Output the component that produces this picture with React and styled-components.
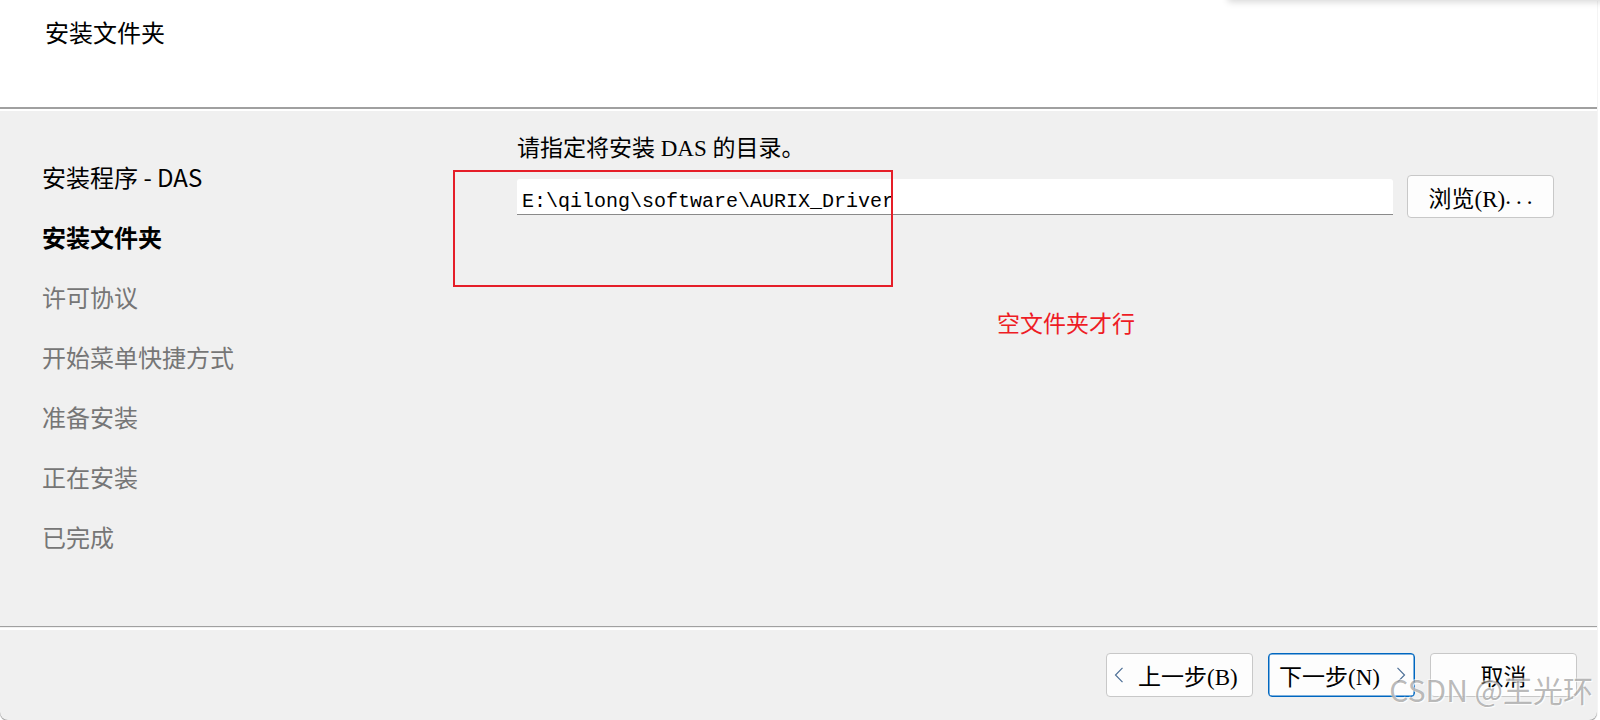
import React from "react";
import styled, { createGlobalStyle } from "styled-components";

const Global = createGlobalStyle`
  html, body { margin: 0; padding: 0; background: #ffffff; }
  body { width: 1600px; height: 720px; overflow: hidden; }
  #root { width: 1600px; height: 720px; }
`;

const sans = `"Noto Sans CJK SC", "Noto Sans", sans-serif`;
const serif = `"Liberation Serif", "Noto Sans CJK SC", serif`;

const Page = styled.div`
  position: relative;
  width: 1600px;
  height: 720px;
  background: #ffffff;
  overflow: hidden;
`;

const TopShadow = styled.div`
  position: absolute;
  top: -12px;
  left: 1228px;
  width: 380px;
  height: 12px;
  background: #fff;
  box-shadow: 0 2px 7px rgba(0, 0, 0, 0.16);
`;

const Window = styled.div`
  width: 1597px;
  height: 720px;
  display: flex;
  flex-direction: column;
  background: #f0f0f0;
  border-radius: 0 0 8px 8px;
  box-shadow: 0 1px 1px rgba(0, 0, 0, 0.45);
  overflow: hidden;
`;

const Header = styled.header`
  height: 109px;
  flex: none;
  background: #ffffff;
  padding: 17px 0 0 45px;
  box-sizing: border-box;
  border-bottom: 2px solid #a0a0a0;
`;

const HeaderTitle = styled.h1`
  margin: 0;
  font-family: ${sans};
  font-size: 24px;
  font-weight: 400;
  line-height: 30px;
  color: #000;
`;

const HeaderGap = styled.div`
  height: 2px;
  flex: none;
  background: #ffffff;
`;

const Main = styled.main`
  flex: none;
  height: 515px;
  display: flex;
  position: relative;
`;

const Sidebar = styled.nav`
  width: 517px;
  flex: none;
  box-sizing: border-box;
  padding: 36px 0 0 42px;
  display: flex;
  flex-direction: column;
`;

const NavItem = styled.div`
  font-family: ${sans};
  font-size: 24px;
  line-height: 60px;
  height: 60px;
  white-space: nowrap;
  color: ${(p) => (p.$state === "pending" ? "#767676" : "#000000")};
  font-weight: ${(p) => (p.$state === "current" ? 700 : 400)};
`;

const Content = styled.section`
  flex: 1;
  position: relative;
  padding-top: 23px;
  display: flex;
  flex-direction: column;
`;

const Prompt = styled.div`
  font-family: ${serif};
  font-size: 23px;
  line-height: 30px;
  color: #000;
  white-space: pre;
`;

const PathRow = styled.div`
  margin-top: 11px;
  height: 43px;
  display: flex;
  align-items: center;
  gap: 14px;
`;

const PathInput = styled.div`
  width: 876px;
  height: 36px;
  box-sizing: border-box;
  background: #ffffff;
  border-bottom: 1px solid #8a8a8a;
  border-radius: 3px 3px 0 0;
  padding: 10px 0 0 5px;
  display: flex;
  align-items: center;
  font-family: "Liberation Mono", "DejaVu Sans Mono", monospace;
  font-size: 20px;
  color: #000;
  white-space: pre;
`;

const Button = styled.button`
  width: ${(p) => p.$w || 147}px;
  height: ${(p) => p.$h || 44}px;
  box-sizing: border-box;
  background: #fdfdfd;
  border: 1px solid ${(p) => (p.$primary ? "#0067c0" : "#c8c8c8")};
  box-shadow: ${(p) => (p.$primary ? "inset 0 0 0 0.5px #0067c0" : "none")};
  border-radius: 4px;
  padding: ${(p) => p.$pad || "0"};
  display: flex;
  align-items: center;
  justify-content: ${(p) => p.$justify || "center"};
  gap: ${(p) => p.$gap || 0}px;
  font-family: ${serif};
  font-size: 23px;
  color: #000;
  cursor: default;
`;

const Dots = styled.span`
  letter-spacing: 5px;
  margin-right: -5px;
`;

const Push = styled.span`
  margin-left: auto;
  display: flex;
`;

const Annotation = styled.div`
  position: absolute;
  left: -64px;
  top: 59px;
  width: 440px;
  height: 117px;
  box-sizing: border-box;
  border: 2px solid #e51e28;
  pointer-events: none;
`;

const Note = styled.div`
  position: absolute;
  left: 480px;
  top: 196px;
  font-family: ${sans};
  font-size: 23px;
  line-height: 30px;
  color: #ee1c25;
`;

const Etched = styled.div`
  flex: none;
  height: 1px;
  background: #a0a0a0;
  border-bottom: 1px solid #f0f0f0;
  box-shadow: 0 2px 0 #ffffff;
  margin-bottom: 1px;
`;

const Footer = styled.footer`
  flex: 1;
  display: flex;
  justify-content: flex-end;
  align-items: flex-start;
  padding: 24px 20px 0 0;
  gap: 15px;
`;

const Watermark = styled.div`
  position: absolute;
  right: 7px;
  top: 667px;
  font-family: "Noto Sans CJK SC", "Noto Sans", sans-serif;
  font-size: 30px;
  line-height: 44px;
  color: rgba(100, 100, 100, 0.45);
  text-shadow: 1px 1px 1px rgba(255, 255, 255, 0.9), -1px -1px 0 rgba(255, 255, 255, 0.5);
  pointer-events: none;
  white-space: pre;
`;

const Chevron = ({ dir }) => (
  <svg width="10" height="16" viewBox="0 0 10 16" aria-hidden="true">
    <path
      d={dir === "left" ? "M8.5 0.8 L1.5 8 L8.5 15.2" : "M1.5 0.8 L8.5 8 L1.5 15.2"}
      fill="none"
      stroke="#4d6f96"
      strokeWidth="1.2"
    />
  </svg>
);

const steps = [
  { label: "安装程序 - DAS", state: "title" },
  { label: "安装文件夹", state: "current" },
  { label: "许可协议", state: "pending" },
  { label: "开始菜单快捷方式", state: "pending" },
  { label: "准备安装", state: "pending" },
  { label: "正在安装", state: "pending" },
  { label: "已完成", state: "pending" },
];

export default function App() {
  return (
    <Page>
      <Global />
      <Window>
        <Header>
          <HeaderTitle>安装文件夹</HeaderTitle>
        </Header>
        <HeaderGap />
        <Main>
          <Sidebar>
            {steps.map((s) => (
              <NavItem key={s.label} $state={s.state}>
                {s.label}
              </NavItem>
            ))}
          </Sidebar>
          <Content>
            <Prompt>请指定将安装 DAS 的目录。</Prompt>
            <PathRow>
              <PathInput>E:\qilong\software\AURIX_Driver</PathInput>
              <Button $w={147} $h={43}>
                浏览(R)<Dots>...</Dots>
              </Button>
            </PathRow>
            <Annotation />
            <Note>空文件夹才行</Note>
          </Content>
        </Main>
        <Etched />
        <Footer>
          <Button $justify="flex-start" $pad="0 0 0 7px" $gap={14}>
            <Chevron dir="left" />
            <span>上一步(B)</span>
          </Button>
          <Button $primary $justify="flex-start" $pad="0 8px 0 10px">
            <span>下一步(N)</span>
            <Push>
              <Chevron dir="right" />
            </Push>
          </Button>
          <Button>取消</Button>
        </Footer>
      </Window>
      <TopShadow />
      <Watermark>CSDN @王光环</Watermark>
    </Page>
  );
}
